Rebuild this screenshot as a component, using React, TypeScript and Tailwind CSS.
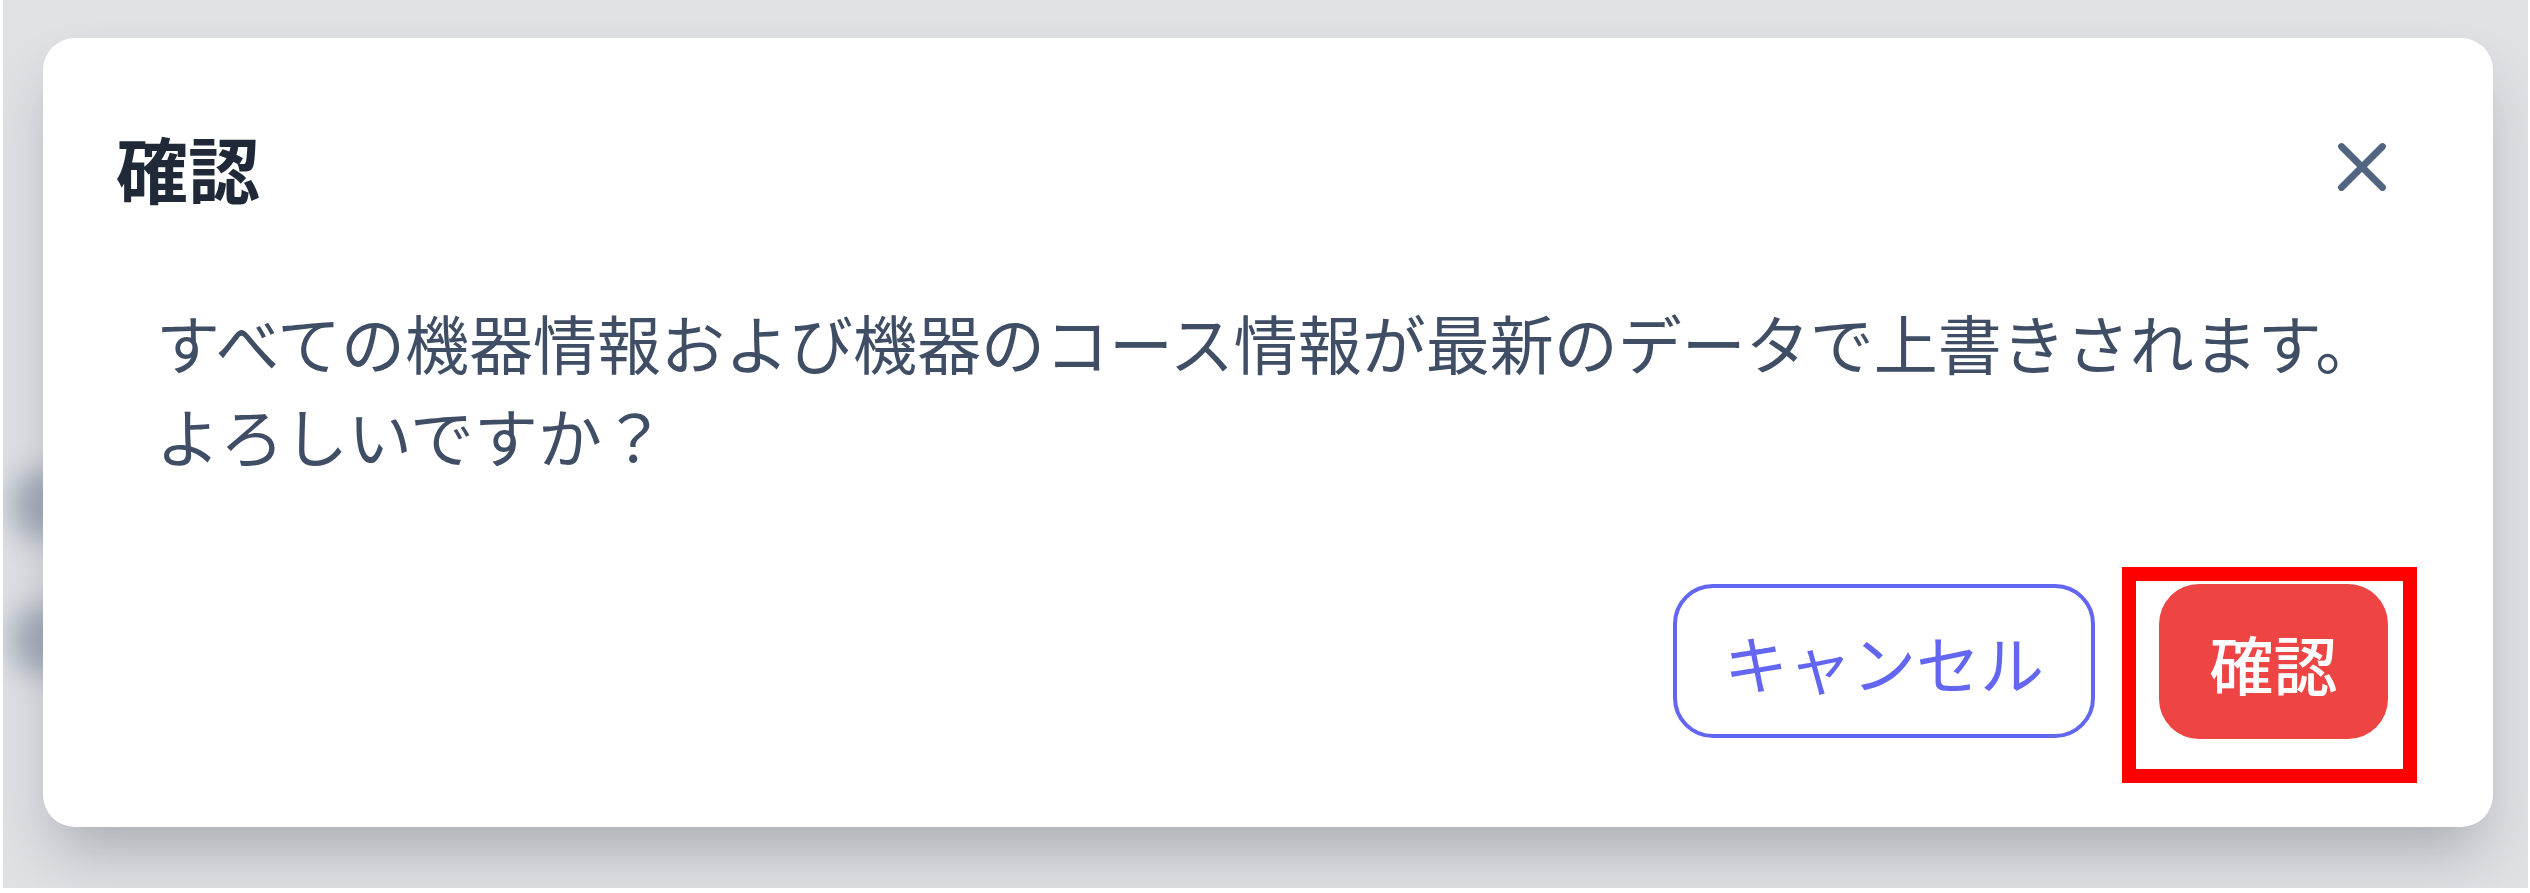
import React from 'react'
import { X } from 'lucide-react'

const jp = '"Noto Sans CJK JP", "Noto Sans", sans-serif'

const App = () => {
  return (
    <div className="w-[2530px] h-[893px] bg-white pl-[3px] pr-[2px] pb-[5px]" style={{ fontFamily: jp }}>
      {/* page behind the modal (blurred) */}
      <div className="relative w-full h-full bg-[#dfe1e5] overflow-hidden">
        <div className="absolute inset-0 pointer-events-none">
          <div className="absolute left-[8px] top-[470px] w-[60px] h-[70px] rounded-full bg-[#8e98aa] blur-[14px] opacity-70" />
          <div className="absolute left-[8px] top-[605px] w-[60px] h-[70px] rounded-full bg-[#8e98aa] blur-[14px] opacity-70" />
        </div>

        {/* modal */}
        <div className="relative ml-[40px] mt-[38px] w-[2450px] h-[789px] bg-white rounded-[32px] shadow-[0_34px_60px_-12px_rgba(40,45,55,0.3)] flex flex-col pt-[79px] pl-[73px] pr-[90px] pb-[88px]">
          {/* header */}
          <div className="flex items-center justify-between h-[100px]">
            <h2 className="text-[72px] leading-[100px] font-bold text-[#1f2937]">確認</h2>
            <button className="text-[#526580]">
              <X size={82} strokeWidth={2} />
            </button>
          </div>

          {/* body */}
          <p className="mt-[78px] pl-[40px] text-[64px] leading-[93px] text-[#3f4e65]">
            すべての機器情報および機器のコース情報が最新のデータで上書きされます。
            <br />
            よろしいですか？
          </p>

          {/* footer */}
          <div className="mt-auto flex justify-end gap-[64px] pr-[15px]">
            <button className="w-[422px] h-[154px] rounded-[40px] border-[4px] border-[#6366f1] text-[#6366f1] text-[64px] leading-none">
              キャンセル
            </button>
            <div className="relative">
              <button className="w-[229px] h-[155px] rounded-[40px] bg-[#ef4444] text-white text-[64px] font-medium leading-none">
                確認
              </button>
              {/* annotation frame */}
              <div className="absolute left-[-37px] top-[-17px] w-[295px] h-[216px] border-[14px] border-[#ff0000] pointer-events-none" />
            </div>
          </div>
        </div>
      </div>
    </div>
  )
}

export default App
